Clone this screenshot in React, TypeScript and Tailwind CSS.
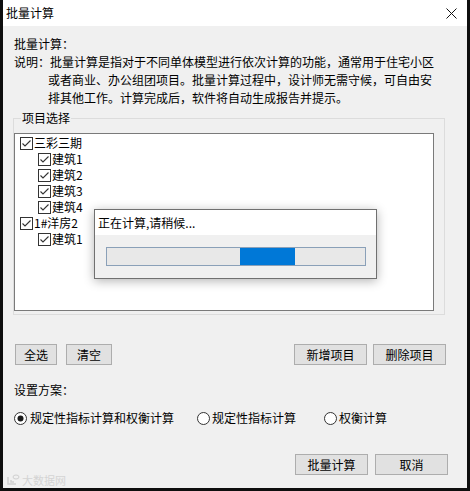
import React from "react";

const font = { fontFamily: '"Noto Sans CJK SC", "Microsoft YaHei", sans-serif' };

const CheckBox = () => (
  <svg width="13" height="13" viewBox="0 0 13 13" className="shrink-0">
    <rect x="0.5" y="0.5" width="12" height="12" fill="#fff" stroke="#333" />
    <path d="M2.5 6.5 L5 9 L10.5 3.5" fill="none" stroke="#333" strokeWidth="1.1" />
  </svg>
);

const Radio = ({ checked }: { checked?: boolean }) => (
  <svg width="13" height="13" viewBox="0 0 13 13" className="shrink-0">
    <circle cx="6.5" cy="6.5" r="6" fill="#fff" stroke="#333" />
    {checked && <circle cx="6.5" cy="6.5" r="3" fill="#1a1a1a" />}
  </svg>
);

const Btn = ({ label, w }: { label: string; w: string }) => (
  <button
    className={`${w} flex h-[21px] items-center justify-center border border-[#adadad] bg-[#e1e1e1] text-[12px] leading-none text-black`}
  >
    {label}
  </button>
);

const TreeRow = ({ label, child }: { label: string; child?: boolean }) => (
  <div className={`flex h-[16px] items-center gap-[1px] ${child ? "pl-[23px]" : "pl-[5px]"}`}>
    <CheckBox />
    <span className="text-[12px] leading-none">{label}</span>
  </div>
);

export default function App() {
  return (
    <div className="h-[491px] w-[470px] bg-[#0e0e0e] pl-[3px]" style={font}>
      <div className="relative flex h-[488px] w-[464px] flex-col bg-[#f0f0f0] text-black">
        {/* title bar */}
        <div className="flex h-[26px] items-center justify-between bg-white pl-[3px] pr-[10px]">
          <span className="text-[12px] leading-none">批量计算</span>
          <svg width="11" height="11" viewBox="0 0 11 11">
            <path d="M0.5 0.5 L10.5 10.5 M10.5 0.5 L0.5 10.5" stroke="#111" strokeWidth="1" />
          </svg>
        </div>

        <div className="flex flex-col pl-[11px] pt-[9px] text-[12px] leading-[18px]">
          <div>批量计算：</div>
          <div className="whitespace-nowrap">说明：批量计算是指对于不同单体模型进行依次计算的功能，通常用于住宅小区</div>
          <div className="whitespace-nowrap pl-[34px]">或者商业、办公组团项目。批量计算过程中，设计师无需守候，可自由安</div>
          <div className="whitespace-nowrap pl-[34px]">排其他工作。计算完成后，软件将自动生成报告并提示。</div>

          {/* group box */}
          <div className="relative -ml-[1px] mt-[11px] h-[197px] w-[432px] border border-[#dcdcdc] pt-[14px]">
            <span className="absolute -top-[10px] left-[7px] bg-[#f0f0f0] px-[1px] text-[12px] leading-[18px]">项目选择</span>
            <div className="h-[178px] w-[420px] border border-[#7a7a7a] bg-white pt-[1px]">
              <TreeRow label="三彩三期" />
              <TreeRow label="建筑1" child />
              <TreeRow label="建筑2" child />
              <TreeRow label="建筑3" child />
              <TreeRow label="建筑4" child />
              <TreeRow label="1#洋房2" />
              <TreeRow label="建筑1" child />
            </div>
          </div>

          {/* buttons row */}
          <div className="mt-[29px] flex items-center pr-[21px]">
            <Btn label="全选" w="w-[42px] ml-[1px]" />
            <Btn label="清空" w="w-[46px] ml-[9px]" />
            <div className="flex-1" />
            <Btn label="新增项目" w="w-[73px]" />
            <Btn label="删除项目" w="w-[73px] ml-[6px]" />
          </div>

          <div className="mt-[16px]">设置方案：</div>

          <div className="mt-[10px] flex h-[18px] items-center">
            <label className="flex w-[183px] items-center gap-[3px]">
              <Radio checked />
              <span>规定性指标计算和权衡计算</span>
            </label>
            <label className="flex w-[127px] items-center gap-[2px]">
              <Radio />
              <span>规定性指标计算</span>
            </label>
            <label className="flex items-center gap-[2px]">
              <Radio />
              <span>权衡计算</span>
            </label>
          </div>

          <div className="mt-[27px] flex justify-end gap-[7px] pr-[19px]">
            <Btn label="批量计算" w="w-[73px]" />
            <Btn label="取消" w="w-[73px]" />
          </div>
        </div>

        {/* watermark */}
        <div className="absolute bottom-[2px] left-[3px] flex items-center gap-[2px] text-[11px] leading-none text-[#d4d4d4]">
          <svg width="14" height="12" viewBox="0 0 14 12">
            <path d="M2 3 L2 10 L10 10 M5 6 L5 8 L8 8" fill="none" stroke="#d0d0d0" strokeWidth="1.5" />
            <ellipse cx="10" cy="3" rx="3" ry="2" fill="none" stroke="#d0d0d0" />
          </svg>
          <span>大数据网</span>
        </div>

        {/* progress popup */}
        <div className="absolute left-[91px] top-[209px] flex h-[70px] w-[283px] flex-col border border-[#707070] bg-[#f0f0f0] shadow-[0_2px_10px_rgba(0,0,0,0.3)]">
          <div className="flex h-[25px] items-center bg-white pl-[3px] text-[12px] leading-none">正在计算,请稍候...</div>
          <div className="pl-[11px] pt-[12px]">
            <div className="flex h-[19px] w-[260px] items-center border border-[#8aa0b8] bg-[#e8e8e8] pl-[133px]">
              <div className="h-[17px] w-[55px] bg-[#0078d7]" />
            </div>
          </div>
        </div>
      </div>
    </div>
  );
}
